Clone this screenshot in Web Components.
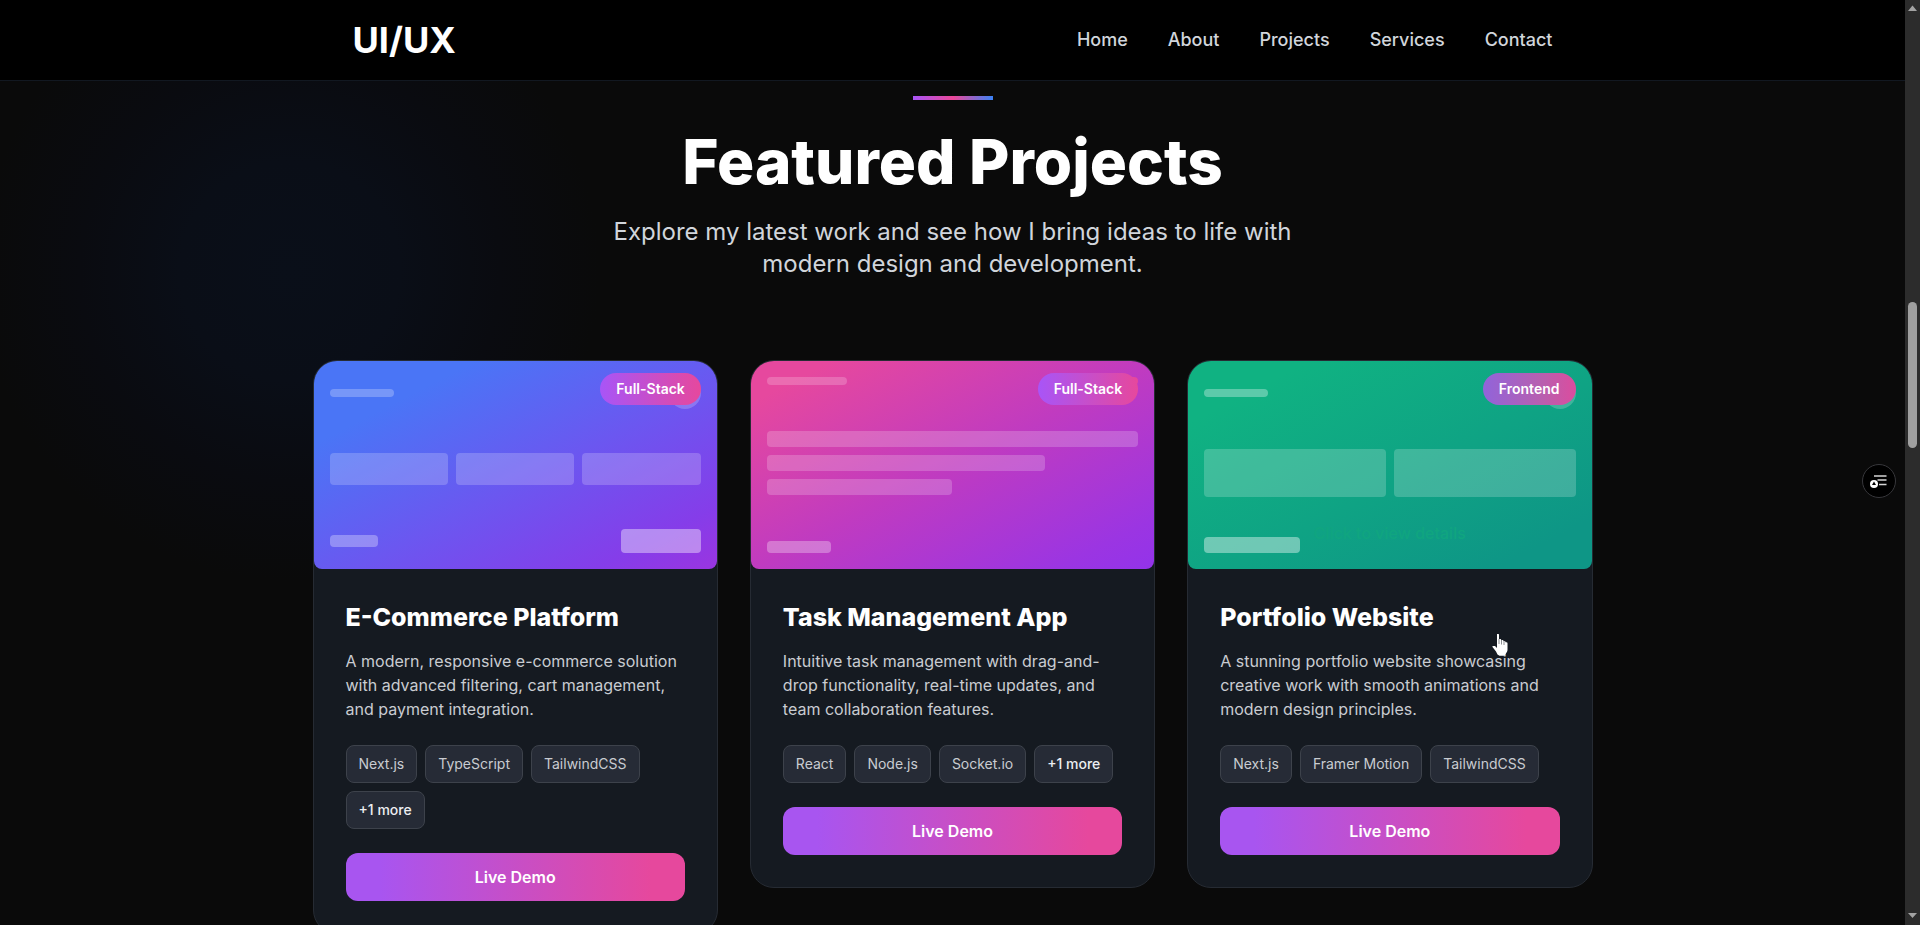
<!DOCTYPE html>
<html lang="en">
<head>
<meta charset="utf-8">
<title>UI/UX Portfolio</title>
<style>
  body { margin: 0; background: #0a0a0a; color: #fff; font-family: Inter, "Open Sans", sans-serif; }
</style>
</head>
<body>
<portfolio-page>
  <site-header slot="header"></site-header>
  <section-intro heading="Featured Projects">Explore my latest work and see how I bring ideas to life with modern design and development.</section-intro>
  <project-grid>
    <project-card category="Full-Stack" tags="Next.js,TypeScript,TailwindCSS,+1 more">
      <project-art slot="art" kind="shop"></project-art>
      <span slot="title">E-Commerce Platform</span>
      A modern, responsive e-commerce solution with advanced filtering, cart management, and payment integration.
    </project-card>
    <project-card category="Full-Stack" tags="React,Node.js,Socket.io,+1 more">
      <project-art slot="art" kind="tasks"></project-art>
      <span slot="title">Task Management App</span>
      Intuitive task management with drag-and-drop functionality, real-time updates, and team collaboration features.
    </project-card>
    <project-card category="Frontend" tags="Next.js,Framer Motion,TailwindCSS">
      <project-art slot="art" kind="folio"></project-art>
      <span slot="title">Portfolio Website</span>
      A stunning portfolio website showcasing creative work with smooth animations and modern design principles.
    </project-card>
  </project-grid>
  <quick-menu slot="overlay"></quick-menu>
  <hand-pointer slot="overlay"></hand-pointer>
  <scroll-track slot="track"></scroll-track>
</portfolio-page>

<script>
const define = (name, markup) => customElements.define(name, class extends HTMLElement {
  connectedCallback() {
    if (this.shadowRoot) return;
    const t = document.createElement('template');
    t.innerHTML = '<style>:host,*{box-sizing:border-box}</style>' + (typeof markup === 'function' ? markup(this) : markup);
    this.attachShadow({ mode: 'open' }).append(t.content.cloneNode(true));
  }
});

define('portfolio-page', `
  <style>
    :host { display: flex; height: 100vh; overflow: hidden; position: relative; }
    .view { flex: 1; min-width: 0; overflow: hidden; position: relative; }
    main {
      padding: 15px 0 80px;
      background: radial-gradient(circle at 290px 190px, #0a0f19 0, #0a0e17 110px, #0a0b10 210px, #0a0a0a 310px);
    }
  </style>
  <div class="view"><slot name="header"></slot><main><slot></slot></main></div>
  <slot name="track"></slot>
  <slot name="overlay"></slot>`);

define('site-header', `
  <style>
    :host { display: block; background: #000; border-bottom: 1px solid #121821; }
    .bar { max-width: 1280px; height: 80px; margin: 0 auto; padding: 0 40px; display: flex; align-items: center; justify-content: space-between; }
    a { color: inherit; text-decoration: none; }
    .logo { font-size: 36px; line-height: 40px; font-weight: 700; }
    nav { display: flex; gap: 40px; font-size: 18px; line-height: 28px; font-weight: 500; color: #d1d5db; }
  </style>
  <header class="bar">
    <a class="logo" href="#top">UI/UX</a>
    <nav><a href="#home">Home</a><a href="#about">About</a><a href="#projects">Projects</a><a href="#services">Services</a><a href="#contact">Contact</a></nav>
  </header>`);

define('section-intro', el => `
  <style>
    :host { display: flex; flex-direction: column; align-items: center; text-align: center; margin-bottom: 80px; }
    .rule { width: 80px; height: 4px; background: linear-gradient(to right, #a855f7, #ec4899, #3b82f6); }
    h2 { margin: 32px 0 24px; font-size: 62px; line-height: 60px; font-weight: 800; }
    p { margin: 0; max-width: 768px; font-size: 24px; line-height: 32px; color: #d1d5db; }
  </style>
  <div class="rule"></div><h2>${el.getAttribute('heading')}</h2><p><slot></slot></p>`);

define('project-grid', `
  <style>
    :host { display: grid; grid-template-columns: repeat(3, minmax(0, 1fr)); gap: 32px; align-items: start; max-width: 1280px; margin: 0 auto; }
  </style><slot></slot>`);

define('project-card', el => `
  <style>
    :host { display: block; background: #151a21; border: 1px solid #262b33; border-radius: 24px; overflow: hidden; position: relative; }
    .badge { position: absolute; top: 12px; right: 16px; padding: 6px 16px; border-radius: 16px; background: linear-gradient(to right, #a855f7, #e6489d); font-size: 14px; line-height: 20px; font-weight: 600; }
    :host([category="Frontend"]) .badge { background: linear-gradient(to right, #9164da, #b95fae 65%, #dc4c9e); }
    .body { padding: 32px; }
    h3 { margin: 0 0 16px; font-size: 25px; line-height: 32px; font-weight: 800; white-space: nowrap; }
    p { margin: 0 0 24px; font-size: 16px; line-height: 24px; color: #c9ccd1; }
    ul { list-style: none; display: flex; flex-wrap: wrap; gap: 8px; margin: 0 0 24px; padding: 0; }
    li { padding: 8px 12px; border: 1px solid #3d424b; border-radius: 8px; background: #262b36; color: #c9ccd1; font-size: 14px; line-height: 20px; }
    li.more { color: #eceef1; font-weight: 500; }
    button { display: block; width: 100%; height: 48px; padding: 0; border: 0; border-radius: 12px; background: linear-gradient(to right, #a855f0 10%, #e6489d 90%); color: #fff; font: 600 16px/24px Inter, sans-serif; cursor: pointer; }
  </style>
  <slot name="art"></slot>
  <span class="badge">${el.getAttribute('category')}</span>
  <div class="body">
    <h3><slot name="title"></slot></h3>
    <p><slot></slot></p>
    <ul>${el.getAttribute('tags').split(',').map(t => `<li${t[0] === '+' ? ' class="more"' : ''}>${t}</li>`).join('')}</ul>
    <button type="button">Live Demo</button>
  </div>`);

const scenes = {
  shop: `<div class="row"><i class="line"></i><i class="dot"></i></div>
    <div class="cols"><i></i><i></i><i></i></div>
    <div class="row"><i class="price"></i><i class="cta"></i></div>`,
  tasks: `<div class="row"><i class="wide"></i><i class="mark"></i></div>
    <div class="list"><i></i><i></i><i></i></div>
    <div class="row"><i class="foot"></i></div>`,
  folio: `<div class="row"><i class="line"></i><i class="dot"></i></div>
    <div class="cols tall"><i></i><i></i></div>
    <div class="row"><i class="link"></i></div>
    <span class="hint">Click to view details</span>`
};

define('project-art', el => `
  <style>
    :host { display: flex; flex-direction: column; justify-content: space-between; height: 208px; padding: 16px; border-radius: 0 0 8px 8px; position: relative; background: linear-gradient(to bottom right, #4a75f6 20%, #6b57f0 55%, #853de9 85%, #9a35e0); }
    :host([kind="tasks"]) { background: linear-gradient(to bottom right, #e6489e 10%, #c03bc0 50%, #9b35e2 88%, #9333ea); }
    :host([kind="folio"]) { background: linear-gradient(to bottom right, #10b282 15%, #0fa384 55%, #0e9686 88%); }
    i { display: block; background: rgb(255 255 255 / .2); border-radius: 4px; }
    .row { display: flex; align-items: center; justify-content: space-between; }
    .line { width: 64px; height: 8px; background: rgb(255 255 255 / .25); }
    :host([kind="folio"]) .line { background: rgb(255 255 255 / .32); }
    .dot { width: 32px; height: 32px; border-radius: 16px; }
    .cols { display: grid; grid-auto-flow: column; grid-auto-columns: 1fr; gap: 8px; }
    .cols i { height: 32px; }
    .cols.tall i { height: 48px; }
    .price { width: 48px; height: 12px; background: rgb(255 255 255 / .3); }
    .cta { width: 80px; height: 24px; background: rgb(255 255 255 / .4); }
    .wide { width: 80px; height: 8px; }
    .mark { width: 24px; height: 8px; background: #e6489d; }
    .list { display: grid; gap: 8px; }
    .list i { height: 16px; }
    .list i:nth-child(2) { width: 75%; }
    .list i:nth-child(3) { width: 50%; }
    .foot { width: 64px; height: 12px; background: rgb(255 255 255 / .3); }
    .link { width: 96px; height: 16px; background: rgb(255 255 255 / .4); }
    .hint { position: absolute; left: 0; right: 0; bottom: 24px; text-align: center; font-size: 16px; line-height: 24px; font-weight: 500; color: #10a580; }
  </style>${scenes[el.getAttribute('kind')]}`);

define('scroll-track', `
  <style>
    :host { display: flex; flex-direction: column; align-items: center; flex: 0 0 15px; background: #2c2c2c; }
    svg { display: block; width: 15px; height: 16px; fill: #a3a3a3; }
    .thumb { width: 9px; flex: 146; background: #9f9f9f; border-radius: 5px; }
    .before { flex: 286; } .after { flex: 461; }
  </style>
  <svg viewBox="0 0 15 16"><path d="M7.5 5.5 12 11H3z"/></svg>
  <div class="before"></div><div class="thumb"></div><div class="after"></div>
  <svg viewBox="0 0 15 16"><path d="M3 4h9l-4.500 5z"/></svg>`);

define('quick-menu', `
  <style>
    :host { display: block; position: absolute; right: 24px; top: 52%; transform: translateY(-50%); }
    button { display: block; width: 34px; height: 34px; padding: 0; border: 1px solid #37373b; border-radius: 17px; background: #000; cursor: pointer; }
    svg { display: block; }
  </style>
  <button type="button" aria-label="Quick menu">
    <svg width="32" height="32" viewBox="0 0 32 32">
      <path d="M11 11h12.500M14.500 15h9M16 19.500h7.500" stroke="#d4d4d4" stroke-width="1.500"/>
      <circle cx="11" cy="19" r="4" fill="#fff"/><path d="m11 16.500 2 3.500H9z" fill="#000"/>
    </svg>
  </button>`);

define('hand-pointer', `
  <style>
    :host { display: block; position: absolute; left: 1492px; top: 633px; pointer-events: none; }
    svg { display: block; }
  </style>
  <svg width="17" height="24" viewBox="0 0 17 24">
    <path d="M5 1h1.500q.5 0 .5.700V6h1.500q.7 0 .7 1h1.300q1 0 1 1h1q1 0 1 1.200h1q1 0 1 1.300v6c0 3-1.800 3.300-2 5.500l-2 .8H7.500l-2-1.300-1.500-3-3.500-4.500V13h2.500L5 15z" fill="#fff"/>
    <path d="M7 6v5M9.500 7v4.500M12 8v4" stroke="#151a21" stroke-width=".5"/>
  </svg>`);
</script>
</body>
</html>
